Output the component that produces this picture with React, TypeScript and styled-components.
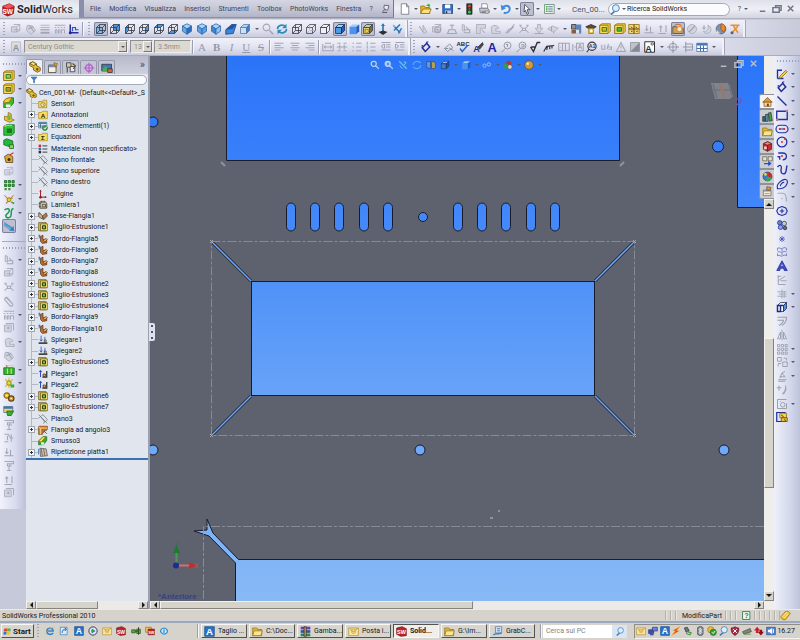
import React from "react";
import styled, { createGlobalStyle, css } from "styled-components";

/* ---------- icon drawings, on a 16 x 16 grid ---------- */

type Stroke = { d: string; s?: string; f?: string; w?: number };
type Letter = { t: string; x: number; y: number; size: number; f: string };
type Mark = Stroke | Letter;

const G = "#a3a5b4";
const LG = "#d3d5de";
const NAVY = "#1d2a9a";
const INK = "#2c3036";
const BLUE = "#4a97e4";
const SKY = "#a8d4f8";
const GOLD = "#f2cb35";
const OLIVE = "#8a6a10";
const GREEN = "#37b030";
const DGREEN = "#13661a";
const RED = "#cf2a2a";
const ORANGE = "#ef8b28";
const WHITE = "#ffffff";

const o = (x: number, y: number, r: number) =>
  `M${x - r} ${y}a${r} ${r} 0 1 0 ${2 * r} 0a${r} ${r} 0 1 0 ${-2 * r} 0z`;
const l = (d: string, s = G, w = 1.4): Stroke => ({ d, s, w });
const a = (d: string, f: string, s?: string, w = 1): Stroke => ({ d, f, s, w });
const t = (text: string, f = INK, size = 13, x = 8, y = 13): Letter => ({ t: text, f, size, x, y });

const wire = (s: string, face?: string): Mark[] => [
  ...(face ? [a(face, BLUE)] : []),
  l("M2 6h8v8h-8zM2 6l4-4h8v8l-4 4M10 6l4-4M6 2v8h8M6 10l-4 4", s, 1),
];
const solid = (top: string, front: string, side: string, s: string): Mark[] => [
  a("M2 6l4-4h8l-4 4z", top, s),
  a("M2 6h8v8h-8z", front, s),
  a("M10 6l4-4v8l-4 4z", side, s),
];
const hex = (left: string, right: string): Mark[] => [
  a("M8 1l6 3-6 4-6-4z", SKY, "#2a64a8"),
  a("M2 4l6 4v7l-6-4z", left, "#2a64a8"),
  a("M8 8l6-4v7l-6 4z", right, "#2a64a8"),
];
const boss = (inner: string): Mark[] => [
  a("M1 3l3-2h11v10l-3 3h-11z", GOLD, OLIVE),
  a("M1 3h11v11h-11z", "#f6dd62", OLIVE),
  a("M4 6h6v5h-6z", inner, DGREEN),
];
const chip = (c: string): Mark[] => [
  a("M2 5h7v7h-7z", LG, c),
  l("M5 2h8v8M9 5l4-3M9 12l4-2M5 9h8", c, 1.1),
];

const ICONS: Record<string, Mark[]> = {
  cubeRed: [
    a("M1 4l8-3 6 3-1 9-7 3-6-3z", "#c41f25", "#7d1015"),
    a("M1 4l8-3 6 3-8 3z", "#e8575a"),
    l("M7 7v8", "#7d1015", 0.8),
    t("SW", WHITE, 8, 7, 13),
  ],
  pin: [a("M6 2l8 1-2 8-5-1-2-3z", "#e8e9f0", "#4c4e5e", 1.4), l("M8 9l-5 4M2 15h9", "#4c4e5e", 1.6)],
  new: [a("M3 1h7l3 4v10h-10z", WHITE, "#666a78"), l("M10 1v4h3", "#666a78", 1)],
  open: [a("M1 4h5l1 2h6v8h-12z", "#e9b52e", OLIVE), a("M4 8h11l-3 6h-11z", "#fbe27a", OLIVE), a("M8 3l4-2 2 3-2 1z", GREEN)],
  save: [a("M1 2h13v12h-13z", "#3572c4", "#1c3b78"), a("M4 2h7v5h-7z", WHITE), a("M4 10h8v4h-8z", "#b9c8e4"), a("M5 11h2v3h-2z", INK)],
  traffic: [a("M5 1h7v14h-7z", "#2b3030", INK), a(o(8.5, 4, 2), "#e04a2c"), a(o(8.5, 8, 1.6), "#73581c"), a(o(8.5, 12, 2), "#32d24b")],
  print: [a("M5 1h7l1 6h-8z", WHITE, "#787c88"), a("M2 7h11l2 3v3h-12z", "#c6c8d2", "#676b76"), l("M5 11h7M5 13h8", "#676b76", 1), a(o(12, 12, 2), "#d8d8d0", "#888")],
  undo: [l("M3 7c3-5 10-4 10 1 0 4-4 6-8 5", "#3c8be0", 2.6), a("M1 2l1 8 6-3z", "#3c8be0")],
  cursor: [a("M5 2l7 7h-4l2 5-2 1-2-5-2 2z", WHITE, INK)],
  options: [a("M2 2h13v12h-13z", "#e9f2ec", "#5d8276"), l("M7 5h6M7 8h6M7 11h6", "#5d6a86", 1.2), a("M4 4h2v2h-2zM4 7h2v2h-2zM4 10h2v2h-2z", GREEN)],
  lens: [l("M9 10l-6 5", "#3c78c0", 2.4), a(o(10, 6, 5), "#d7efff", "#4f7fae", 1.4)],

  gBox: chip(G),
  gDye: [a("M3 3l7 1 4 6-6 5-6-5z", LG, G), l("M6 3l6 9M4 8l7-3", G)],
  gLines: [l("M2 3h12M2 6h12", G, 1), l("M2 9h12", G, 1.8), l("M2 13h12", G, 2.6)],
  gHatch: [l("M1 3h14M1 6h2m2 0h2m2 0h2m2 0h2M2 14v-5h2v5M6 14v-5h2v5M10 14v-5h4v5", G, 1.2)],
  axes: [l("M3 2v11h11", "#2c2a9e", 2), l("M6 11v-5h4v3h4", "#2456c8", 1.6), a(o(3, 13, 2), NAVY)],

  cubeFront: [a("M2 6h8v8h-8z", "#77b8f2"), ...wire(INK)],
  cubeBack: wire(INK, "M6 2h8v8h-8z"),
  cubeLeft: wire(INK, "M2 6l4-4v8l-4 4z"),
  cubeRight: wire(INK, "M10 6l4-4v8l-4 4z"),
  cubeTop: wire(INK, "M2 6l4-4h8l-4 4z"),
  cubeBottom: wire(INK, "M2 14l4-4h8l-4 4z"),
  iso1: hex("#66a9e8", "#2d6fbe"),
  iso2: hex("#5aa0e4", "#5aa0e4"),
  iso3: hex("#3f86d2", "#8cc2f2"),
  tilt: [a("M1 9l8-7h6l-4 12-10 1z", "#3b86d8", "#173c78"), a("M1 9l8-7h6l-5 6z", "#1f56a6")],
  normal: [...solid(SKY, "#c4e2fa", "#3a7dcc", "#5b7596")],
  gLens: [l("M10 10l5 5", G, 2.2), l(o(6, 6, 4.5), G, 1.4)],
  refresh: [l("M2 8c0-5 7-7 11-3M14 8c0 5-7 7-11 3", "#2e8bbd", 2.2), a("M14 1v6h-6zM2 15v-6h6z", "#2e8bbd")],
  wire: wire("#30333c"),
  hidden: [l("M2 6h8v8h-8zM2 6l4-4h8v8l-4 4M10 6l4-4", "#3b3e48", 1), l("M6 3v6M7 10h6M5 11l-2 2", "#a8aab4", 1)],
  outline: [a("M2 6h8v8h-8zM2 6l4-4h8l-4 4zM10 6l4-4v8l-4 4z", "#eef0f6", "#3b3e48")],
  shadedEdges: solid("#9fd0fa", "#4b9ce8", "#1f62b4", "#10284e"),
  shaded: [a("M2 5l4-3h9l-4 3z", "#9ccbfb"), a("M2 5h9v10h-9z", "#4a94f0"), a("M11 5l4-3v9l-4 4z", "#1f5fc8")],
  section: [...solid("#c6c8b8", "#e4df96", "#6c6c58", "#3a3a2e"), a("M4 8l6 1-2 4-4 1z", GOLD, OLIVE)],
  anchor: [l("M8 1v11", "#2f7aa8", 2.2), a("M5 4l3-3 3 3z", "#2f7aa8"), a("M2 12l6-2 6 2-6 4z", INK)],
  pencils: [l("M3 3l9 10M12 2l-8 8M10 14l4-7", "#2876b8", 2), a("M2 2l4 2-2 2z", "#7fd3ee")],

  gA: [a("M3 4l5 8V3l5 9-4 2z", LG, G)],
  gB: [...chip(G), l(o(9, 9, 4), G)],
  gC: [l("M8 2v6M5 3h6M4 9h8l2 5h-12z", G)],
  gD: [a("M3 2l3 1v8l-3-1z", LG, G), l("M6 9h7v4h-8M8 5l4 4", G)],
  gE: [a("M2 2h12v5h-7v7h-5z", LG, G), l("M9 9l4 4", G)],
  gF: [a("M3 7c0-6 10-4 10 0l-4 1v3h6v3h-11z", LG, G)],
  gG: [l("M2 13c3 0 2-4 6-5s3-5 6-6M4 14l9-9", G)],
  gH: [a("M6 2h4v5h3l-5 6-5-6h3z", LG, G), l("M2 14h12", G)],
  gI: [a("M1 8l6-4 8 3-6 5z", LG, G), l("M6 5v6M9 12v2", G)],
  gDown: [l("M2 13h12M5 3v7M3 8l2 2 2-2M10 5v8", G)],
  gUp: [l("M2 14h10M5 12v-8M3 6l2-2 2 2M12 3v9", G)],
  gRing: [a(o(8, 8, 6), LG, G), l("M4 12l8-8", G, 2)],
  gCrescent: [a("M9 3c6 2 6 10-1 11-4 0-5-3-5-3 5 1 8-3 6-8z", LG, G), l("M4 3v5M2 6l2 2 2-2", G)],
  partColor: [a("M2 2h6v6h-6z", "#8d919c", INK), a("M8 2h7v12h-7z", "#5c86b8"), a("M2 9h6v5h-6z", "#8a5c3a"), a("M8 9h4v5h-4z", "#dfe4ee")],
  hat: [a("M1 5l7-3 7 3-3 2h-8z", "#5a4a34", INK), a("M5 7h6v7h-6z", GOLD, OLIVE), a("M7 9h3v3h-3z", WHITE)],
  boxGold: boss("#e3b520"),
  boxGreen: boss("#58b03c"),
  boxGrid: [a("M1 2h14v12h-14z", "#f4d56a", OLIVE), l("M1 8h14M8 2v12M4 5l2 2M10 5l2 2M4 11h2M11 11h2", "#5a3c0c", 1.3)],
  simulate: [a("M1 5h5l1 2h8v7h-14z", "#c8a060", "#5d4620"), a(o(10, 8, 3.4), "#fbe9c0", ORANGE, 1.4), l("M3 4c2-3 8-3 10 0", "#c86a28", 1.3)],
  globeOrange: [a(o(8, 8, 6.5), "#7c93b0", "#5c5f68"), a("M8 1c6 0 8 8 3 11l-3-4z", ORANGE, "#9c4c10"), a("M2 9l5 5-4 0z", "#e8dcc8")],
  scissors: [l("M2 3h12M6 4l6 9M12 4l-7 8", ORANGE, 2), a(o(4, 13, 2), "#5a5f6a")],

  fontBox: [a("M2 1h12v14h-12z", "#d9dae2", "#b4b6c2"), t("A", "#8b8e9a", 12, 8, 13)],
  left: [l("M2 3h12M2 6h8M2 9h12M2 12h8", G)],
  center: [l("M2 3h12M4 6h8M2 9h12M4 12h8", G)],
  right: [l("M2 3h12M6 6h8M2 9h12M6 12h8", G)],
  fit: [l("M1 4v9h14v-9M4 8h8M5 6l-2 2 2 2M11 6l2 2-2 2M4 3h8M4 13h8", G)],
  split: [l("M2 3h4M10 3h4M2 13h4M10 13h4M1 8h14M5 5v6M11 5v6", G)],
  bullets: [l("M7 3h7M7 8h7M7 13h7M2 3h2M2 8h2M2 13h2", G)],
  numbers: [l("M7 3h7M7 8h7M7 13h7M3 1v4M3 6v4M3 11v4", G)],
  outdent: [l("M2 2h12M8 5h6M8 8h6M2 12h12M6 4v6M5 4l-3 3 3 3", G)],
  indent: [l("M2 2h12M8 5h6M8 8h6M2 12h12M2 4v6M3 4l3 3-3 3", G)],

  smartDim: [l("M3 9l6-6 4 5-6 6z", NAVY, 2), l("M2 7l2-1M8 2l3-1", NAVY, 1.4)],
  gDim: [l("M2 10l7-6 4 5-7 5zM8 9l6 4M2 10h5", "#8d90a0", 1.3)],
  spell: [t("ABC", "#23242c", 8, 8, 7), l("M4 10l3 4 7-8", "#2f68c8", 2)],
  painter: [t("A", NAVY, 12, 6, 15), a("M8 8l6-6 1 3-5 6z", "#4a4a48", INK)],
  note: [t("A", "#2225a8", 17, 8, 14)],
  balloon: [l(o(10, 6, 4.6) + "M7 10l-5 5M10 4v4M8 5l2-1", "#8d90a0", 1.2)],
  balloons: [l(o(10, 6, 4.6) + "M7 10l-5 5M8 5h4v3h-4", "#8d90a0", 1.2)],
  finish: [l("M2 8l4 6 5-12h4M3 8h6", INK, 1.8)],
  weld: [l("M1 14l4-7 10-1M6 7l-1 5M9 7v4M12 7v3", INK, 1.5)],
  tol: [l("M1 3h14v10h-14zM6 3v10M10 3v10M3 8h1", G)],
  datum: [l("M1 4v9M3 8h3M6 3h9v10h-9z", G), t("A", G, 9, 10.5, 11)],
  target: [l(o(8, 7, 5.5), "#343640", 1.5), t("A1", "#343640", 7, 8, 9), l("M4 11l-3 4", "#343640")],
  hole: [l("M1 5v6h4v-6M10 4l-2 7M9 8h5v3h-4", G)],
  warn: [l("M8 2l6 12h-12zM8 6v4M8 12v1", G)],
  hatch: [a("M2 2h12v12h-12z", "#c0c2ca", "#8c8e98"), a("M14 2v12h-12z", "#868994")],
  block: [a("M1 1h13v14h-13z", WHITE, INK, 1.3), t("A", INK, 12, 6, 14), l(o(11, 4, 1.6), INK, 1)],
  centerMark: [l(o(8, 8, 5) + "M8 0v16M0 8h16", "#8d90a0", 1.2)],
  centerLine: [l("M5 1v14M5 4h9v8h-9M1 8h14", "#8d90a0", 1.2)],
  table: [a("M1 3h14v11h-14z", WHITE, "#456ea6"), a("M1 3h14v3h-14z", "#3d74bd"), l("M1 10h14M6 6v8M10 6v8", "#456ea6")],

  bossA: boss("#8ec850"),
  bossB: boss("#b99a28"),
  fillet: [a("M1 14v-6c0-6 6-7 13-7v7l-5 6z", "#3bba2c", DGREEN), a("M1 8c0-6 6-7 11-7l-4 6z", GOLD, OLIVE), a("M4 10h6v4h-6z", "#e9fbe2")],
  rib: [a("M2 7l5 1v-6l4 2v6l4 2-6 3-7-3z", "#e8c238", OLIVE), a("M6 5l4 1v6h-4z", "#6fbb3e")],
  shell: [a("M1 3l4-2h10v11l-3 3h-11z", "#2fc43a", DGREEN), a("M5 6h7v6h-7z", "#1b7a20"), l("M1 3h3M3 2h9", GOLD, 1.2)],
  draft: [a("M1 3l4-2 8 3v6l-3 2-9-3z", "#26b83c", DGREEN), a("M8 9h6v5h-5z", "#8fd65c", DGREEN)],
  wizard: [a("M2 6l5-3 6 3v8h-9z", "#d6a93c", "#5c4010"), a(o(8, 10, 2), "#3a2c14"), l("M9 4l5-3", RED)],
  gShell: chip("#b2b4c0"),
  pattern: [a("M2 2h3v3h-3zM7 2h3v3h-3zM12 2h3v3h-3zM2 7h3v3h-3zM7 7h3v3h-3zM12 7h3v3h-3z", GREEN, DGREEN), a("M2 12h3v3h-3zM7 12h3v3h-3z", "#4e8a36")],
  refGeo: [l("M2 3l6 7 6-7M8 10l-4 4M5 7h8", "#b6922a", 1.5), a(o(8, 9, 2.6), GOLD, OLIVE), l("M11 12l4 2", GREEN, 2)],
  curve: [l("M2 4c3-3 8-2 6 2s-6 4-4 7 7 1 7-3-1-7 3-8", "#1f9a50", 2)],
  instant: [l("M1 3l11 7M1 7l9 6", "#6a86b8", 1.3), l("M2 5l11 7", "#3f9fd0", 2.2), a("M14 8l1 7-7-1z", "#2f86c0")],
  flange: [a("M1 5h14v9h-14z", GREEN, DGREEN), l("M3 2h10l2 3M6 6v7M11 6v7", "#c7e85a", 1.6), l("M5 2v3", OLIVE)],
  spark: [l("M3 3l10 10M13 3l-10 10M8 1v14", "#e0c02c", 1.6), a(o(8, 8, 3), "#d2e23c", OLIVE), a("M10 10h5v4h-5z", GREEN)],
  gears: [a(o(5, 6, 3.6), GOLD, OLIVE, 1.6), a(o(11, 10, 3.6), "#dc9d2e", "#65450c", 1.6), a(o(5, 6, 1), WHITE), a(o(11, 10, 1), WHITE)],
  configs: [a("M1 2h12v8h-12z", "#f6d552", "#54728c"), a("M1 2h12v3h-12z", "#3d74bd"), a("M5 8h9l-3 6h-5z", GREEN, DGREEN)],
  gClamp: [l("M2 2h12v3h-8v3h6M8 8v6M5 14h6M10 5l-2 3", "#a8aab8", 1.5)],
  gJoin: [l("M2 3h5l3 5h4M2 13h5M6 5v6M11 3v10", "#a8aab8", 1.5)],
  gClip: [l("M4 3l8 8c3 3-1 5-3 3l-6-7c-2-2 1-5 3-3l6 7", "#a8aab8", 1.5)],
  gSheet: [a("M2 4h9v9h-9z", LG, "#a8aab8"), l("M4 2h10v9M5 8h4M7 6v4", "#a8aab8", 1.3)],
  gMesh: [l("M2 3l4 4M14 3l-4 4M2 13l4-4M14 13l-4-4M6 7h4v3h-4zM2 3h3M11 3h3", "#a8aab8", 1.4)],

  sketch: [l("M2 14v-11h6M2 14h8", "#26309a", 1.8), a("M5 11l8-8 2 2-8 8-3 1z", GOLD, OLIVE)],
  line: [l("M2 2l12 12", "#2430a4", 1.8)],
  rect: [l("M1 3h14v11h-14z", "#2430a4", 1.8), a("M0 13h3v3h-3zM13 1h3v3h-3z", "#c87a92")],
  slot: [l("M5 3h6a5 5 0 0 1 0 10h-6a5 5 0 0 1 0-10zM5 8h6", "#2430a4", 1.6), a(o(5, 8, 1.4), RED), a(o(11, 8, 1.4), RED)],
  circle: [l(o(8, 8, 6.5), "#2430a4", 1.7), a(o(8, 8, 1.3), RED), a(o(12, 4, 1.2), RED)],
  arc: [l("M3 4h6c7 0 6 9 0 9M2 9h3v4", "#2430a4", 1.7), a(o(8, 8, 1.3), RED)],
  spline: [l("M2 4c3-4 6-2 5 2s0 8 4 7 2-9 4-11", "#2430a4", 1.8)],
  ellipse: [l("M2 13c-2-4 6-12 11-11s1 11-6 12-5 0-5-1zM6 11c-1-2 3-6 5-5", "#2430a4", 1.5)],
  gFillet: [l("M2 3h7c4 0 5 4 5 11", "#a8aab8", 1.6), a(o(8, 10, 1), "#a8aab8")],
  polygon: [l("M8 2l5 2 2 4-2 4-5 2-5-2-2-4 2-4zM8 5v6M5 8h6", "#2430a4", 1.5)],
  pics: [a(o(5, 5, 3), "#6c89a8", NAVY), a(o(11, 6, 3), "#c7d6a8", NAVY), a(o(6, 11, 3), "#8ca4d4", NAVY), a(o(12, 12, 2.4), "#4f6a9e", INK)],
  point: [l("M8 4v8M4 8h8M5 5l6 6M11 5l-6 6", "#3d48b0", 1)],
  plane: [
    l("M2 3c3-2 4 2 7 0s4 0 5 0M2 8c3-2 4 2 7 0s4 0 5 0M2 13c3-2 4 2 7 0s4 0 5 0M2 3v3M14 3v3M2 10v3M14 10v3M8 4v3M8 9v3", "#5a66b0", 1),
  ],
  text: [a("M8 1l7 13h-4l-1-3h-4l-1 3h-4z", "#4050c0", NAVY), a("M8 5l1 3h-2z", "#dfe2fa")],
  gTrim: [l("M3 2v12h10M3 9l9-6M2 3h5M6 9h8", "#9a9cab", 1.2)],
  gOffset: [l("M2 5h12M4 8h10M2 11h12M8 2v12M11 4v9", "#a8aab8", 1.3)],
  convert: [...solid("#e5ecf6", WHITE, "#4f8ee0", "#1c2c50"), l("M6 7v7h-4v-8h8", "#1c2c84", 2)],
  gSweep: [l("M2 3h12c0 6-2 8-6 11M2 7h8c0 3-3 5-6 7", "#9a9cab", 1.5)],
  gMirror: [l("M8 1v14M6 4l-4 9h4zM10 4l4 9h-4z", "#9a9cab", 1.2)],
  gGrid: [l("M2 2h3v3h-3zM7 2h3v3h-3zM12 2h3v3h-3zM2 7h3v3h-3zM7 7h3v3h-3zM12 7h3v3h-3zM2 12h3v3h-3zM7 12h3v3h-3zM12 12h3v3h-3z", "#9a9cab", 1.1)],
  gMove: [l("M2 2h5v5h-5zM9 8h6v6h-6zM7 10h-4v4M10 3h4v3", "#9a9cab", 1.2)],
  gRel: [l("M3 13h11M5 11l3-7 4 5h-7M8 4l4-2M3 15h9", "#9a9cab", 1.3)],
  gFix: [l("M4 2v7M1 5h6M8 13c4-2 5-6 5-11M10 14l4-8", "#9a9cab", 1.3)],
  gQuick: [l("M2 2h12M2 2v12M2 14h12M14 7v7M6 4v1", "#9a9cab", 1.3), l(o(9, 9, 3), "#9a9cab", 1.2)],
  rapid: [a("M1 2h11v12h-11z", "#dfe3f8", NAVY, 1.6), a("M5 3h9v6h-9z", "#f2d554", OLIVE), a("M7 9h8v5h-8z", "#e9c040", "#5c4410"), l("M7 5l3 3M11 11l2 2", "#7a3c18", 1.4)],

  part: [a("M1 3l4-2 5 3v2l5 3v4l-4 2-5-3v-3l-5-3z", "#e3bb34", "#5e4608"), a("M1 3l4-2 5 3-4 2z", "#f9e47c", "#5e4608"), a(o(11, 11, 1.6), "#5e4608")],
  propTab: [a("M2 4h10v10h-10z", "#f6f0dc", "#47423a"), a("M2 4h10v3h-10z", "#6d8ab0"), a("M9 1l5 1-2 5z", "#e6a63a", OLIVE)],
  configTab: [a("M2 1h6v6h-6z", "#d8c890", INK), a("M7 6h6v7h-6z", "#e8e8f0", INK), l("M3 8v6M10 2l4 3-3 4", "#5b4c2c", 1.5)],
  dimTab: [l(o(8, 8, 4.6) + "M8 1v14M1 8h14", "#b65ccc", 1.6)],
  renderTab: [a("M1 3h13v9h-13z", "#4178b4", INK), a("M2 9l4-4 4 5v2h-8z", "#4fa84e"), a("M9 9h6v5h-6z", "#d8682e", INK)],
  funnel: [a("M2 2h12l-5 6v6l-2-1v-5z", "#3f86cc", "#2a5f9e")],

  sensors: [a("M1 4h6l1-2h6v12h-13z", "#f4d568", "#9b7a20"), a(o(8, 9, 3.4), "#f9efc4", "#7e6010"), l("M8 7v2l2 1", "#7e6010", 1)],
  annot: [a("M1 4h5l1-2h8v12h-14z", "#f8dc5c", "#a5821c"), t("A", "#1f1c14", 10, 8, 13)],
  bom: [a("M1 2h13v9h-13z", "#eef2f6", "#406a8c"), a("M1 2h13v3h-13z", "#4a80a8"), l("M4 5v6M1 8h8", "#406a8c"), a(o(11, 11, 4), "#3fa45c", "#1a5a34"), l("M9 11l2 2 3-4", WHITE)],
  equat: [a("M1 4h5l1-2h8v12h-14z", "#f8dc5c", "#a5821c"), t("Σ", "#1f1c14", 10, 8, 13)],
  material: [l("M7 3h8M7 8h8M7 13h8", "#3c4450", 1.6), a("M1 1h4v4h-4z", RED), a("M1 6h4v4h-4z", "#2c6cc0"), a("M1 11h4v4h-4z", INK)],
  planeT: [l("M4 4l4-3 7 8-4 4zM1 7l3-3M8 15l3-2M1 1l14 14", "#6c717b", 1.1)],
  origin: [l("M4 2v11h9", "#a81f2c", 1.6), a("M2 4l2-3 2 3z", "#a81f2c"), a(o(4, 13, 2), "#821820"), a(o(12, 13, 1.4), "#3c4a5a")],
  lamiera: [a("M3 3h9l2 3v7h-11z", "#d9cfae", "#3f3a30", 1.4), l("M6 1v4M10 1v3M1 6h4M1 10h4M7 7h5v4h-5z", "#4d4334", 1.3)],
  baseFlange: [a("M1 3l6 4v6l-6-4z", "#c9b48c", "#3c3020"), a("M7 8l6-5 2 5-6 6z", "#b07a3c", "#3c3020"), l("M2 2l3 3", "#3c8fc8", 1.6)],
  cut: [a("M1 1h12v13h-12z", "#e5c134", "#54410c"), a("M4 3h11v11h-11z", "#f7e47a", "#54410c"), a("M7 6h5v5h-5z", "#8fc04a", "#183c10", 1.6)],
  edgeFlange: [l("M2 1v6M1 3h3", "#2e62b8", 1.4), a("M4 4l4-2v7l6 1v4l-7 1-3-3z", "#b5703a", "#46260e"), a("M8 10l5-3 2 2-4 4z", "#e9a85c", "#46260e")],
  unfold: [l("M5 1v8M3 7l2 3 2-3M11 3v8", "#2f4fc0", 1.3), l("M1 13h14", INK, 2.4), a("M10 8h3v4h-3z", "#d8c8a0", INK)],
  fold: [l("M4 13v-10M2 5l2-3 2 3", "#2f4fc0", 1.6), l("M7 13h7v-10", INK, 2), a("M8 8h4v4h-4z", "#d29a4c", "#46260e")],
  miter: [a("M1 2h14v5h-8v8h-6z", "#e78a28", "#5c3208"), l("M4 15v-9l-3-4M4 5h11", "#ffd48a", 1.2), l("M9 9l5 5M9 13v-4h5", "#5c3208", 1.2)],
  chamfer: [a("M1 14v-6l7-7h6v6l-5 7z", "#2faa2c", DGREEN), a("M1 8l7-7 4 1-7 8z", "#f6d84a", OLIVE), a("M5 10h5v4h-5z", "#e6fbdc")],
  flat: [a("M3 2l10 1 2 11-11 1z", "#cfc3ac", "#3a3a44"), l("M5 3l2 11M9 3l2 11", "#7c5a38", 1.4), l("M1 3v9", "#3f86cc", 1.6)],

  zoomFit: [l(o(6, 6, 4) + "M9 9l5 5", "#b9d2f0", 2), a(o(6, 6, 2.4), "#3f73c0")],
  zoomArea: [l(o(6, 6, 4) + "M9 9l5 5", "#b9d2f0", 2), a("M4 4h5v5h-5z", "#5f8cd8", "#dceafa")],
  zoomPrev: [l("M2 2l12 12", "#5fc0ea", 2.4), l("M9 3l4 1-3 4M3 9l4 5", "#8ccdf0", 1.4)],
  rotate: [l("M2 8c0-6 8-8 12-3M14 8c0 6-8 8-12 3", "#5fa8ea", 1.8)],
  sectionV: [a("M1 3l6-1v12l-6-2z", "#6d9ad4", "#26477a"), a("M9 2l6 2v9l-6 1z", "#c0a450", "#26477a")],
  orient: [...solid("#8fb8e6", "#4a7cc0", "#2a508c", "#1b3866")],
  glasses: [l(o(4, 9, 2.6) + o(11, 7, 2.6), "#9cc0ec", 1.6)],
  appear: [a(o(9, 5, 4), "#b23a30"), a(o(5, 10, 4), "#3a9a4a"), a(o(11, 11, 3.6), "#dcdcd0", "#555")],
  scene: [a(o(8, 8, 7), "#d09a38", "#5a4418"), a(o(6, 6, 2), "#f9e6ae")],

  home: [a("M1 9l7-7 7 7z", "#e39a36", "#7c4810"), a("M3 9h10v6h-10z", "#f7dc9c", "#7c4810"), a("M7 11h3v4h-3z", "#7c4810")],
  library: [a("M1 8h4v7h-4z", "#3d6a4a", INK), a("M5 5h4v10h-4z", "#5c88b4", INK), a("M9 3l4-1 2 12-4 1z", "#3fa046", INK)],
  folder: [a("M1 3h6l1 2h6v9h-13z", "#e7b93e", OLIVE), a("M3 7h12l-2 7h-12z", "#fae590", OLIVE)],
  toolboxR: [a("M2 4l6-3 6 3v8l-6 3-6-3z", "#c02c30", "#5e1014"), a("M2 4l6 2 6-2-6-3z", "#e88a86", "#5e1014"), a("M3 8h4v4h-4z", "#f4c6c0"), l("M8 6v9", "#5e1014", 1)],
  palette: [a("M1 1h6v6h-6zM9 1h6v6h-6z", "#e6e0c4", "#5a5a50"), a("M3 10h6v-3l5 4-5 4v-3h-6z", "#2c4cc8")],
  ball: [a(o(8, 8, 6.5), "#3c78d0", "#1d3e74"), a("M8 8v-6.5a6.5 6.5 0 0 1 6 8z", RED), a("M8 8l6 2a6.5 6.5 0 0 1-9 4z", "#38a848"), a(o(5, 5, 2), "#e6d650")],
  props: [a("M2 6h11v8h-11z", "#f4ecd8", "#6b6252"), a("M2 6h11v2h-11z", "#7d8ca8"), a("M7 1l6 1-1 4h-5z", "#e2963c", "#6b4a1c"), l("M4 11h7", "#8a8272", 1)],

  ie: [l("M3 8h10c0-6-10-6-10 0s7 7 10 3", "#2f84d6", 2.6), l("M1 13c2-6 8-11 14-11", "#e5b83a", 1.2)],
  desk: [a("M2 2h11v12h-11z", "#d7eafc", "#2f6ea8"), l("M5 11c0-4 2-6 6-6M9 3l3 2-3 3", "#2f6ea8", 1.6)],
  blueA: [a("M1 1h14v14h-14z", "#2472cc", "#184f90"), t("A", WHITE, 14, 8, 13)],
  media: [a(o(8, 8, 6.6), "#e6e8f0", "#3a3f68", 1.6), a("M6 4l6 4-6 4z", "#3266c4"), a(o(7, 8, 2), GREEN)],
  mail: [a("M1 3h14v11h-14z", "#f8e9a0", "#b18a34"), l("M3 4l5 5 6-6", "#c87f2a", 1.4), l(o(8, 8, 3), "#d09a3a", 1)],
  sw: [a("M1 3l8-2 6 3v10l-8 1-6-3z", "#c2232a", "#6c1014"), t("SW", WHITE, 8, 8, 12)],
  connect: [a("M1 6h6v5h-6zM9 5h6v7h-6z", "#5aa83c", "#27501a"), l("M6 8h5M12 2v12", "#27501a", 1.6)],
  swOpen: [a("M1 2h9v8h-9z", "#f2c955", OLIVE), a("M5 5h10v9h-10z", "#c2232a", "#6c1014"), t("SW", WHITE, 6, 10, 12)],
  swirl: [a(o(8, 8, 6), "#d4eafa"), l("M3 10c-3-6 8-10 10-3M13 6c3 7-8 10-10 3M8 5v6", "#2f8cd0", 2)],
  rar: [a("M1 1h14v4h-14z", "#7b3f9c"), a("M1 6h14v4h-14z", "#2c58a8"), a("M1 11h14v4h-14z", "#2c8a48"), a("M6 1h3v14h-3z", "#d6a13c", INK)],
  grab: [a("M5 1h9v9h-9z", "#e4eefa", "#4a6c9c"), l("M2 13c3-4 7 0 12-3", "#2f8cd0", 2.2), l("M7 4h5M7 7h5", "#4a6c9c")],
  flag: [a("M2 3l5-1v5l-6 1z", "#e2492a"), a("M8 2l6 1-1 5-6-1z", "#5db23a"), a("M1 9l6-1-1 5-5 1z", "#2f74d8"), a("M7 8l6 1-1 5-6-1z", "#f2c22c")],
  nets: [a("M1 6h8v6h-8z", "#41568c", NAVY), a("M7 2h8v6h-8z", "#6f84c4", NAVY), l("M3 14h6", NAVY, 1.6)],
  bolt: [a("M14 1l-11 6 4 1-6 7 12-7-4-1z", "#e5382a", "#f3b12c")],
  usb: [a("M2 3l5-1 3 6-5 2z", "#64747c", INK), l("M7 9l6 2-2 3-6-2", "#4e9c46", 2)],
  bt: [a("M4 3c1-3 8-3 9 0v10c-1 3-8 3-9 0z", "#7c858c", "#4c5258"), l("M6 5l5 5-3 3v-10l3 3-5 5", WHITE, 1.2)],
  antivirus: [a(o(6, 6, 5), "#f2bd34", OLIVE), a(o(10, 10, 5), "#3f9c3c", DGREEN), l("M8 10l2 2 3-4", WHITE, 1.4)],
  shield: [a("M8 1c3 2 6 2 6 2 1 6-2 10-6 12-4-2-7-6-6-12 3 0 6-2 6-2z", "#a82c48", "#5c0e24"), l("M5 5l6 6M11 5l-6 6", WHITE, 1.6)],
  eject: [a("M1 9l12-5 2 5-12 4z", "#7d8678", "#3c4038"), l("M3 13h11", "#5c9848", 1.6)],
  arrows: [a("M5 1l5 6h-3v4h-4v-4h-3z", "#c82028"), a("M11 15l5-6h-3v-3h-4v3h-3z", "#8c1018")],
  volume: [a("M1 2h14v12h-14z", "#4c82d8", "#204a90"), a("M3 6h3l4-3v10l-4-3h-3z", WHITE), l("M12 5v6", WHITE)],
  help: [a("M1 1h13v14h-13z", "#eef8ee", "#226a3c", 1.4), t("?", "#1d8a3a", 13, 8, 13)],
  tag: [a("M1 10l7-8h4l3 3-7 9h-4z", "#f0c034", "#8c6a10"), l("M4 10l6-7M6 12l6-7", "#fdf0a8", 1.4)],
};

const Glyph = styled.svg<{ $size: number }>`
  display: block;
  flex: none;
  width: ${(p) => p.$size}px;
  height: ${(p) => p.$size}px;
  overflow: visible;
`;

function Icon({ name, size = 12 }: { name: string; size?: number }) {
  return (
    <Glyph $size={size} viewBox="0 0 16 16" aria-hidden="true">
      {(ICONS[name] || []).map((m, i) =>
        "t" in m ? (
          <text key={i} x={m.x} y={m.y} fontSize={m.size} fill={m.f} textAnchor="middle" fontFamily="Liberation Sans, sans-serif" fontWeight="700">
            {m.t}
          </text>
        ) : (
          <path key={i} d={m.d} fill={m.f || "none"} stroke={m.s || "none"} strokeWidth={m.w || 1} />
        )
      )}
    </Glyph>
  );
}

/* ---------- page ---------- */

const Global = createGlobalStyle`
  *, *::before, *::after { box-sizing: border-box; }
  body { margin: 0; background: #c5c8d9; }
  body, button, input, select { font-family: Roboto, "Liberation Sans", sans-serif; font-size: 7px; color: #17181c; }
  button { padding: 0; border: 0; background: none; }
  ul { margin: 0; padding: 0; list-style: none; }
`;

const Page = styled.div`
  display: flex;
  flex-direction: column;
  min-height: 100vh;
`;

const bar = css`
  display: flex;
  align-items: center;
  flex: none;
  overflow: hidden;
`;

const MenuBar = styled.header`
  ${bar}
  height: 19px;
  padding-right: 4px;
  background: linear-gradient(#dfe1ea, #eeeff5 50%, #d2d4df);
  border-bottom: 1px solid #b1b3c3;
`;

const Brand = styled.div`
  display: flex;
  align-items: center;
  gap: 2px;
  width: 79px;
  padding-left: 2px;
  font-size: 11px;
  color: #25262d;
  flex: none;
`;

const MenuStrip = styled.nav`
  display: flex;
  align-items: center;
  justify-content: space-between;
  width: 315px;
  height: 18px;
  padding: 0 3px 0 6px;
  border-left: 5px solid #8b8ea9;
  border-right: 1px solid #73768d;
  background: linear-gradient(#d4d6e3, #c3c5d5 60%, #b1b3c8);
  border-bottom: 1px solid #8c8fa6;
  flex: none;
`;

const MenuItem = styled.button`
  color: #42435a;
  line-height: 14px;
`;

const QuickTools = styled.div`
  display: flex;
  align-items: center;
  justify-content: space-between;
  width: 170px;
  padding: 0 2px 0 4px;
  flex: none;
`;

const DocName = styled.span`
  width: 44px;
  padding-left: 8px;
  color: #4b4d5c;
  font-size: 8px;
  white-space: nowrap;
  flex: none;
`;

const SearchPill = styled.label`
  display: flex;
  align-items: center;
  width: 122px;
  height: 13px;
  gap: 1px;
  border: 1px solid #a3a6b6;
  border-radius: 7px;
  background: #fbfbfd;
  flex: none;
`;

const BareInput = styled.input`
  flex: 1;
  min-width: 0;
  width: 0;
  padding: 0;
  border: 0;
  background: none;
  outline: 0;
  color: inherit;
  &::placeholder { color: inherit; opacity: 1; }
`;

const WindowButtons = styled.div<{ $light?: boolean }>`
  display: flex;
  align-items: center;
  gap: ${(p) => (p.$light ? 5 : 4)}px;
  color: ${(p) => (p.$light ? "#b9bdc8" : "#707487")};
`;

const WindowButton = styled.button`
  color: inherit;
`;

const Spring = styled.div`
  flex: 1;
`;

const Gap = styled.span<{ $s: number }>`
  flex: 0 0 ${(p) => p.$s}px;
`;

const ToolRow = styled.div`
  ${bar}
  height: 18px;
  background: linear-gradient(#f1f2fa, #dfe1ef 60%, #c9cbde);
  border-bottom: 1px solid #a9abc0;
`;

const ToolDock = styled.div`
  flex: none;
  background: linear-gradient(90deg, #d9dbe9, #c5c8d9);
  padding-top: 1px;
`;

const Run = styled.div<{ $len: number; $column?: boolean }>`
  display: flex;
  flex: none;
  justify-content: space-between;
  ${(p) => (p.$column ? css`flex-direction: column; height: ${p.$len}px;` : css`width: ${p.$len}px;`)}
`;

const ToolButton = styled.button<{ $pressed?: boolean }>`
  display: grid;
  place-items: center;
  width: 14px;
  height: 14px;
  flex: none;
  border-radius: 2px;
  ${(p) => p.$pressed && css`background: #bdbfd2; box-shadow: inset 0 0 0 1px #7e819c;`}
`;

const LetterButton = styled(ToolButton)<{ $look?: "bold" | "italic" | "under" | "strike" }>`
  color: #9799a8;
  font: 11px "Liberation Serif", serif;
  font-weight: ${(p) => (p.$look === "bold" ? 700 : 400)};
  font-style: ${(p) => (p.$look === "italic" ? "italic" : "normal")};
  text-decoration: ${(p) => (p.$look === "under" ? "underline" : p.$look === "strike" ? "line-through" : "none")};
`;

const Grip = styled.span<{ $flat?: boolean }>`
  flex: none;
  ${(p) =>
    p.$flat
      ? css`width: 22px; height: 2px; margin: 0 auto; background: repeating-linear-gradient(90deg, #9fa2b8 0 1px, transparent 1px 3px);`
      : css`width: 2px; height: 14px; margin: 0 4px 0 3px; background: repeating-linear-gradient(#9fa2b8 0 1px, transparent 1px 3px);`}
`;

const Rule = styled.span`
  width: 2px;
  height: 14px;
  margin: 0 1px;
  flex: none;
  border-left: 1px solid #9a9db3;
  border-right: 1px solid #f8f8fc;
`;

const RowEnd = styled.span`
  align-self: stretch;
  width: 3px;
  flex: none;
  border-right: 2px solid #f1f2f8;
  box-shadow: 1px 0 #a3a6ba;
`;

const RowVoid = styled.span`
  align-self: stretch;
  flex: 1;
  margin-left: 1px;
  background: linear-gradient(90deg, #d8dae8, #c8cada);
`;

const Caret = styled.span<{ $w?: number }>`
  width: ${(p) => p.$w || 5}px;
  display: grid;
  place-items: center;
  flex: none;
  &::after {
    content: "";
    border: 2px solid transparent;
    border-top-color: #55586c;
    border-bottom: 0;
  }
`;

const Combo = styled.label<{ $w: number }>`
  display: flex;
  width: ${(p) => p.$w}px;
  height: 13px;
  flex: none;
  border: 1px solid #8f8f92;
  border-right-color: #eeeeee;
  border-bottom-color: #eeeeee;
  background: #dcd9d3;
  color: #8d8c8b;
  select, input { width: 0; min-width: 0; flex: 1; appearance: none; border: 0; padding: 0 0 0 3px; background: none; color: inherit; outline: 0; }
`;

const DropKnob = styled.span`
  display: grid;
  place-items: center;
  width: 9px;
  flex: none;
  background: #d6d3cc;
  border: 1px solid #f6f5f2;
  border-right-color: #77756f;
  border-bottom-color: #77756f;
`;

const Work = styled.main`
  display: flex;
  flex: 1;
  min-height: 0;
`;

const SideDock = styled.aside<{ $right?: boolean }>`
  width: 26px;
  flex: none;
  background: #c6c9da;
  ${(p) => p.$right && css`background: linear-gradient(90deg, #eef0fb, #d0d4e9 70%, #bfc3d9);`}
`;

const SideBar = styled.div<{ $right?: boolean }>`
  display: flex;
  flex-direction: column;
  gap: 4px;
  padding: ${(p) => (p.$right ? "4px 0 0 1px" : "7px 0 9px 2px")};
  background: linear-gradient(90deg, #f1f2fc, #d8dbee 60%, #bcc0d8);
  ${(p) => p.$right && css`background: none; gap: 5px;`}
`;

const SideCell = styled.div`
  display: flex;
  align-items: center;
  gap: 1px;
  height: 13px;
`;

const Break = styled.span`
  height: 2px;
  margin-top: 4px;
  border-top: 1px solid #a7aac0;
`;

const TreePanel = styled.section`
  position: relative;
  display: flex;
  flex-direction: column;
  width: 124px;
  flex: none;
  background: #e1e5ed;
  border-right: 2px solid #9ba0b0;
`;

const TabBar = styled.div`
  display: flex;
  align-items: flex-end;
  gap: 1px;
  height: 18px;
  padding-top: 3px;
  background: linear-gradient(#b8bacb, #cdd0dd);
`;

const Tab = styled.button<{ $on?: boolean }>`
  display: grid;
  place-items: center;
  width: 17px;
  height: ${(p) => (p.$on ? 15 : 14)}px;
  border: 1px solid #9698ab;
  border-bottom: 0;
  border-radius: 2px 2px 0 0;
  background: ${(p) => (p.$on ? "#edf0f6" : "#c4c6d5")};
`;

const More = styled.button`
  margin-left: auto;
  padding: 0 3px 3px 0;
  font-size: 11px;
  color: #4b4f66;
`;

const FilterBox = styled.label`
  display: flex;
  align-items: center;
  height: 10px;
  margin: 1px 1px 3px 0;
  padding-left: 3px;
  border: 1px solid #a5a9b8;
  border-radius: 5px;
  background: #fcfdfe;
`;

const RootRow = styled.div`
  display: flex;
  align-items: center;
  gap: 2px;
  height: 10px;
  overflow: hidden;
  white-space: nowrap;
`;

const Tree = styled.ul`
  display: grid;
  grid-auto-rows: 1fr;
  min-height: 360px;
`;

const TreeRow = styled.li`
  display: flex;
  align-items: center;
  white-space: nowrap;
`;

const Branch = styled.span`
  display: grid;
  place-items: center;
  align-self: stretch;
  width: 12px;
  flex: none;
  background:
    linear-gradient(#b4b8c2, #b4b8c2) 5px 0 / 1px 100% no-repeat,
    linear-gradient(#b4b8c2, #b4b8c2) 6px 50% / 6px 1px no-repeat;
`;

const Expand = styled.button`
  display: grid;
  place-items: center;
  width: 7px;
  height: 7px;
  margin-right: 1px;
  border: 1px solid #a0a4ae;
  background:
    linear-gradient(#30343c, #30343c) center / 3px 1px no-repeat,
    linear-gradient(#30343c, #30343c) center / 1px 3px no-repeat,
    #f4f6f9;
`;

const RowLabel = styled.span`
  padding-left: 3px;
`;

const Rollback = styled.div`
  height: 2px;
  background: #3a71b4;
`;

const Handle = styled.button`
  position: absolute;
  right: -7px;
  top: 267px;
  z-index: 2;
  display: flex;
  flex-direction: column;
  align-items: center;
  justify-content: space-around;
  width: 6px;
  height: 18px;
  border-radius: 0 2px 2px 0;
  background: #dfe2ee;
  i { width: 2px; height: 2px; background: #4b5068; }
`;

const knob = css`
  background: #d6d3ca;
  border: 1px solid #f4f2ec;
  border-right-color: #85837b;
  border-bottom-color: #85837b;
`;

const HScroll = styled.div`
  display: flex;
  height: 8px;
  flex: none;
  background: #eceae6;
`;

const VScroll = styled.div`
  display: flex;
  flex-direction: column;
  width: 10px;
  flex: none;
  padding-top: 143px;
  background: #efeeea;
`;

const Thumb = styled.span<{ $grow: number }>`
  ${knob}
  flex: ${(p) => p.$grow} 0 0;
`;

const Track = styled.span<{ $grow: number }>`
  flex: ${(p) => p.$grow} 0 0;
`;

const ArrowKnob = styled.button<{ $dir: "left" | "right" | "up" | "down" }>`
  ${knob}
  display: grid;
  place-items: center;
  width: 10px;
  height: ${(p) => (p.$dir === "up" || p.$dir === "down" ? 10 : 8)}px;
  flex: none;
  &::after {
    content: "";
    border: 3px solid transparent;
    border-${(p) => ({ left: "right", right: "left", up: "bottom", down: "top" })[p.$dir]}-color: #16171a;
    border-${(p) => ({ left: "left", right: "right", up: "top", down: "bottom" })[p.$dir]}-width: 0;
  }
`;

const ViewColumn = styled.section`
  display: flex;
  flex-direction: column;
  flex: 1;
  min-width: 0;
`;

const Canvas = styled.div`
  position: relative;
  flex: 1;
  min-height: 0;
  background: #5d626e;
`;

const Drawing = styled.svg`
  position: absolute;
  inset: 0;
  width: 100%;
  height: 100%;
`;

const HeadsUp = styled.div`
  position: absolute;
  top: 2px;
  left: 218px;
  display: flex;
  align-items: center;
`;

const ViewButtons = styled.div`
  position: absolute;
  top: 3px;
  right: 5px;
`;

const TaskTabs = styled.div`
  position: absolute;
  top: 38px;
  right: -10px;
  z-index: 2;
  display: flex;
  flex-direction: column;
`;

const TaskTab = styled.button<{ $on?: boolean }>`
  display: grid;
  place-items: center;
  width: 15px;
  height: 15px;
  border: 1px solid #8f919c;
  border-right: 0;
  border-radius: 2px 0 0 2px;
  background: ${(p) => (p.$on ? "#f4f4f6" : "#cbccd0")};
`;

const Status = styled.footer`
  ${bar}
  height: 12px;
  padding: 0 9px 0 2px;
  background: #d6d3cc;
  border-top: 1px solid #eceae5;
`;

const Ridges = styled.span<{ $w: number }>`
  width: ${(p) => p.$w}px;
  height: 9px;
  flex: none;
  background: repeating-linear-gradient(90deg, #b3b0a8 0 1px, #e8e6e0 1px 2px, transparent 2px 5px);
`;

const StatusCell = styled.span`
  padding: 0 3px;
`;

const TaskBar = styled.footer`
  ${bar}
  height: 19px;
  padding: 0 0 1px 1px;
  background: #d6d3cc;
  border-top: 2px solid #9aa8c0;
`;

const TaskButton = styled.button<{ $on?: boolean; $start?: boolean }>`
  display: flex;
  align-items: center;
  gap: ${(p) => (p.$start ? 1 : 3)}px;
  width: ${(p) => (p.$start ? 33 : 46)}px;
  height: 14px;
  padding: 0 ${(p) => (p.$start ? 1 : 2)}px;
  flex: none;
  white-space: nowrap;
  overflow: hidden;
  background: ${(p) => (p.$on ? "#efeeeb" : "#d8d5ce")};
  border: 1px solid;
  border-color: ${(p) => (p.$on ? "#55534e #f8f7f4 #f8f7f4 #55534e" : "#f8f7f4 #55534e #55534e #f8f7f4")};
  font-weight: ${(p) => (p.$on || p.$start ? 700 : 400)};
  font-size: ${(p) => (p.$start ? 8 : 7)}px;
`;

const Launch = styled.div`
  display: flex;
  justify-content: space-between;
  width: 128px;
  margin-right: 25px;
  flex: none;
`;

const Windows = styled.div`
  display: flex;
  gap: 2px;
  margin: 0 4px 0 1px;
`;

const DeskSearch = styled.label`
  display: flex;
  align-items: center;
  width: 84px;
  height: 13px;
  padding-left: 3px;
  background: #ffffff;
  color: #85827c;
  flex: none;
`;

const LensKnob = styled.span`
  display: grid;
  place-items: center;
  align-self: stretch;
  width: 15px;
  background: #dbe4f2;
`;

const Tray = styled.div`
  display: flex;
  flex: 1;
  align-items: center;
  justify-content: space-between;
  height: 15px;
  margin-left: 7px;
  padding: 0 5px 0 1px;
  border: 1px solid #918e87;
  border-right: 0;
  border-bottom-color: #f4f2ee;
`;

/* ---------- data ---------- */

const MENUS = ["File", "Modifica", "Visualizza", "Inserisci", "Strumenti", "Toolbox", "PhotoWorks", "Finestra", "?"];

const TREE: [string, string, boolean][] = [
  ["Sensori", "sensors", false],
  ["Annotazioni", "annot", true],
  ["Elenco elementi(1)", "bom", true],
  ["Equazioni", "equat", true],
  ["Materiale <non specificato>", "material", false],
  ["Piano frontale", "planeT", false],
  ["Piano superiore", "planeT", false],
  ["Piano destro", "planeT", false],
  ["Origine", "origin", false],
  ["Lamiera1", "lamiera", false],
  ["Base-Flangia1", "baseFlange", true],
  ["Taglio-Estrusione1", "cut", true],
  ["Bordo-Flangia5", "edgeFlange", true],
  ["Bordo-Flangia6", "edgeFlange", true],
  ["Bordo-Flangia7", "edgeFlange", true],
  ["Bordo-Flangia8", "edgeFlange", true],
  ["Taglio-Estrusione2", "cut", true],
  ["Taglio-Estrusione3", "cut", true],
  ["Taglio-Estrusione4", "cut", true],
  ["Bordo-Flangia9", "edgeFlange", true],
  ["Bordo-Flangia10", "edgeFlange", true],
  ["Spiegare1", "unfold", false],
  ["Spiegare2", "unfold", false],
  ["Taglio-Estrusione5", "cut", true],
  ["Piegare1", "fold", false],
  ["Piegare2", "fold", false],
  ["Taglio-Estrusione6", "cut", true],
  ["Taglio-Estrusione7", "cut", true],
  ["Piano3", "planeT", false],
  ["Flangia ad angolo3", "miter", true],
  ["Smusso3", "chamfer", false],
  ["Ripetizione piatta1", "flat", true],
];

/* A trailing "*" marks a pressed tool, a trailing "+" one with a drop-down. */
const FEATURES = "bossA+ bossB+ fillet+ rib shell draft wizard gShell pattern+ refGeo+ curve+ instant*".split(" ");
const SHEET = "gD+ gBox gMesh gClip gHatch+ gSheet gF+ gDye flange+ spark+ gears configs gClamp gJoin gDown gClamp gUp gSheet".split(" ");
const SKETCH =
  "sketch+ smartDim+ line+ rect+ slot+ circle+ arc+ spline+ ellipse+ gFillet+ polygon pics point plane text gTrim gOffset+ convert+ gSweep gMirror gGrid+ gMove+ gRel+ gFix gQuick+ rapid".split(" ");

const TASKS: [string, string][] = [
  ["Taglio ...", "blueA"],
  ["C:\\Doc...", "folder"],
  ["Gamba...", "rar"],
  ["Posta i...", "mail"],
  ["Solid...", "sw"],
  ["G:\\Im...", "folder"],
  ["GrabC...", "grab"],
];

function Tools({ names, len }: { names: string; len: number }) {
  return (
    <Run $len={len}>
      {names.split(" ").map((n, i) => {
        const name = n.replace("*", "");
        return (
          <ToolButton key={i} aria-label={name} $pressed={n.endsWith("*")}>
            <Icon name={name} />
          </ToolButton>
        );
      })}
    </Run>
  );
}

function SideTools({ items, len }: { items: string[]; len: number }) {
  return (
    <Run $len={len} $column>
      {items.map((n, i) => {
        const name = n.replace(/[+*]/, "");
        return (
          <SideCell key={i}>
            <ToolButton aria-label={name} $pressed={n.endsWith("*")}>
              <Icon name={name} />
            </ToolButton>
            {n.endsWith("+") && <Caret />}
          </SideCell>
        );
      })}
    </Run>
  );
}

function WinControls({ light }: { light?: boolean }) {
  const marks = ["M2 8h6", "M4 4v-2h6v5h-2M1 4h7v5h-7z", "M2 2l6 6M8 2l-6 6"];
  const names = ["Minimize", "Restore", "Close"];
  return (
    <WindowButtons $light={light}>
      {marks.map((d, i) => (
        <WindowButton key={d} aria-label={names[i]}>
          <Glyph $size={10} viewBox="0 0 11 11">
            <path d={d} fill="none" stroke="currentColor" strokeWidth="1.6" />
          </Glyph>
        </WindowButton>
      ))}
    </WindowButtons>
  );
}

function Model() {
  const edge = "#161c2c";
  return (
    <Drawing viewBox="150 56 614 546" preserveAspectRatio="xMinYMin slice" role="img" aria-label="Sheet metal part, front view">
      <defs>
        <linearGradient id="sky" gradientUnits="userSpaceOnUse" x1="0" y1="56" x2="0" y2="602">
          <stop offset="0" stopColor="#2a74f8" />
          <stop offset="0.2" stopColor="#3a80fb" />
          <stop offset="0.42" stopColor="#5092f7" />
          <stop offset="0.62" stopColor="#67a3f8" />
          <stop offset="1" stopColor="#88b9f5" />
        </linearGradient>
      </defs>
      <g fill="url(#sky)" stroke={edge} strokeWidth="1">
        <path d="M226.5 50V160.500H619.5V50zM737.5 50V207.500H770V50z" />
        {[291, 315, 339, 364, 388, 458, 482, 506, 531, 555].map((x) => (
          <rect key={x} x={x - 4.5} y="203" width="9" height="28" rx="4.5" />
        ))}
        <circle cx="423" cy="217" r="4.5" />
        <circle cx="718" cy="146.5" r="5.5" />
        <circle cx="153" cy="122" r="5" />
        <circle cx="153" cy="450" r="5" />
        <circle cx="420" cy="450" r="5" />
        <circle cx="724" cy="450" r="5" />
        <rect x="251.5" y="281.5" width="343" height="114" />
        <path d="M770 559.500H238.500L213 533L207 519V530L194 531L209 536L235.500 563V610H770z" />
      </g>
      {["M213 243L251 281", "M633 243L595 281", "M213 434L251 396", "M633 434L595 396"].map((d) => (
        <g key={d}>
          <path d={d} stroke={edge} strokeWidth="3" />
          <path d={d} stroke="#6fa6f0" strokeWidth="1.6" />
        </g>
      ))}
      <g fill="none" stroke="#9a9ea8" strokeWidth="1" strokeDasharray="9 2 3 2" opacity="0.7">
        <path d="M211.500 241.500H634.500V435.500H211.500z" />
        <path d="M764 526.500H203.500V602" />
      </g>
      <g stroke="#a4a8b0" strokeWidth="1">
        <path d="M210 240l3 3M213 240l-3 3M633 240l3 3M636 240l-3 3M210 434l3 3M213 434l-3 3M633 434l3 3M636 434l-3 3" />
        <path d="M221 162l4 4M624 162l-4 4M490 518h3M498 511h2" strokeWidth="2" opacity="0.7" />
      </g>
      <g>
        <path d="M176.500 565V550" stroke="#4d9a58" strokeWidth="2" />
        <path d="M173 553l3.500-8 3.500 8z" fill="#1e7a2c" />
        <path d="M177 565.500H190" stroke="#e06a68" strokeWidth="2" />
        <path d="M189 562l8 3.500-8 3.500z" fill="#c82c2c" />
        <circle cx="176" cy="565.5" r="3" fill="#1d2a9a" />
        <text x="174" y="546" fontSize="7" fill="#2c7c3a">Y</text>
        <text x="194" y="568" fontSize="7" fill="#d04a48">X</text>
        <text x="158" y="599" fontSize="8" fontWeight="700" fontFamily="Liberation Sans, sans-serif" fill="#393f86">*Anteriore</text>
      </g>
      <g opacity="0.5">
        <path d="M711 83h17l5 13-3 3h-15z" fill="#a4a4a8" />
        <path d="M713 84l4 14M729 84l3 12M712 90h19" stroke="#82858c" strokeWidth="1.5" fill="none" />
        <path d="M720 83l5 15" stroke="#d0906c" strokeWidth="3" fill="none" />
      </g>
      <path d="M736 100c3-3 7 0 4 3l-4 2" stroke="#7655a8" strokeWidth="1.4" fill="none" />
    </Drawing>
  );
}

export default function App() {
  return (
    <Page>
      <Global />
      <MenuBar>
        <Brand>
          <Icon name="cubeRed" size={13} />
          <span><b>Solid</b>Works</span>
        </Brand>
        <MenuStrip>
          {MENUS.map((m) => <MenuItem key={m}>{m}</MenuItem>)}
          <Icon name="pin" size={9} />
        </MenuStrip>
        <QuickTools>
          <ToolButton aria-label="New"><Icon name="new" /></ToolButton><Caret />
          <ToolButton aria-label="Open"><Icon name="open" /></ToolButton><Caret />
          <ToolButton aria-label="Save"><Icon name="save" /></ToolButton><Caret />
          <ToolButton aria-label="Rebuild"><Icon name="traffic" /></ToolButton>
          <ToolButton aria-label="Print"><Icon name="print" /></ToolButton><Caret />
          <ToolButton aria-label="Undo"><Icon name="undo" /></ToolButton><Caret />
          <ToolButton aria-label="Select" $pressed><Icon name="cursor" /></ToolButton><Caret />
          <ToolButton aria-label="Options"><Icon name="options" /></ToolButton><Caret />
        </QuickTools>
        <DocName>Cen_00...</DocName>
        <SearchPill>
          <Icon name="lens" size={11} />
          <Caret />
          <BareInput aria-label="Ricerca SolidWorks" placeholder="Ricerca SolidWorks" />
        </SearchPill>
        <Spring />
        <MenuItem>?</MenuItem>
        <Caret $w={9} />
        <Spring />
        <WinControls />
      </MenuBar>

      <ToolDock>
        <ToolRow>
          <Grip />
          <Tools len={72} names="gBox gDye gLines gHatch axes" />
          <Rule />
          <Grip />
          <Tools len={158} names="cubeFront* cubeBack cubeLeft cubeRight cubeTop cubeBottom iso1 iso2 iso3 tilt normal" />
          <Caret $w={9} />
          <Tools len={143} names="gLens refresh wire hidden outline shadedEdges* shaded section* anchor pencils" />
          <RowEnd />
          <Grip />
          <Tools len={144} names="gA gB gC gD gE gF gG gMesh gH gI" />
          <Caret $w={9} />
          <Tools len={159} names="partColor hat boxGold boxGreen boxGrid gDown gUp simulate* gRing gCrescent globeOrange" />
          <Tools len={14} names="scissors" />
          <RowEnd />
          <RowVoid />
        </ToolRow>
        <ToolRow>
          <Grip />
          <Tools len={15} names="fontBox" />
          <Combo $w={104}>
            <select aria-label="Font" defaultValue="Century Gothic"><option>Century Gothic</option></select>
            <DropKnob><Caret /></DropKnob>
          </Combo>
          <Gap $s={2} />
          <Combo $w={23}>
            <select aria-label="Font size" defaultValue="13"><option>13</option></select>
            <DropKnob><Caret /></DropKnob>
          </Combo>
          <Gap $s={1} />
          <Combo $w={37}><input aria-label="Text height" defaultValue="3.5mm" /></Combo>
          <Rule />
          <Run $len={73}>
            <LetterButton>A</LetterButton>
            <LetterButton $look="bold">B</LetterButton>
            <LetterButton $look="italic">I</LetterButton>
            <LetterButton $look="under">U</LetterButton>
            <LetterButton $look="strike">S</LetterButton>
          </Run>
          <Rule />
          <Tools len={45} names="left center right" />
          <Rule />
          <Tools len={86} names="fit split bullets numbers outdent indent" />
          <RowEnd />
          <Grip />
          <Tools len={14} names="smartDim" />
          <Caret $w={9} />
          <Tools len={215} names="gDim spell painter note balloon balloons finish weld tol datum target hole warn hatch block" />
          <Caret $w={9} />
          <Tools len={43} names="centerMark centerLine table" />
          <Caret $w={9} />
          <Gap $s={3} />
          <RowEnd />
          <RowVoid />
        </ToolRow>
      </ToolDock>

      <Work>
        <SideDock>
          <SideBar>
            <Grip $flat />
            <SideTools items={FEATURES} len={164} />
            <Break />
            <Grip $flat />
            <SideTools items={SHEET} len={247} />
          </SideBar>
        </SideDock>

        <TreePanel>
          <TabBar>
            <Tab $on aria-label="FeatureManager"><Icon name="part" /></Tab>
            <Tab aria-label="PropertyManager"><Icon name="propTab" /></Tab>
            <Tab aria-label="ConfigurationManager"><Icon name="configTab" /></Tab>
            <Tab aria-label="DimXpertManager"><Icon name="dimTab" /></Tab>
            <Tab aria-label="RenderManager"><Icon name="renderTab" /></Tab>
            <More aria-label="More tabs">»</More>
          </TabBar>
          <FilterBox>
            <Icon name="funnel" size={8} />
            <BareInput aria-label="Filter" />
          </FilterBox>
          <RootRow>
            <Icon name="part" size={11} />
            Cen_001-M-&nbsp; (Default&lt;&lt;Default&gt;_S
          </RootRow>
          <Tree>
            {TREE.map(([name, icon, more]) => (
              <TreeRow key={name}>
                <Branch>{more && <Expand aria-label={`Expand ${name}`} />}</Branch>
                <Icon name={icon} size={10} />
                <RowLabel>{name}</RowLabel>
              </TreeRow>
            ))}
          </Tree>
          <Rollback />
          <Spring />
          <HScroll>
            <ArrowKnob $dir="left" aria-label="Scroll left" />
            <Thumb $grow={62} />
            <Track $grow={42} />
            <ArrowKnob $dir="right" aria-label="Scroll right" />
          </HScroll>
          <Handle aria-label="Collapse panel"><i /><i /><i /></Handle>
        </TreePanel>

        <ViewColumn>
          <Canvas>
            <Model />
            <HeadsUp>
              {["zoomFit", "zoomArea", "zoomPrev", "rotate", "sectionV", "orient+", "shaded+", "glasses+", "appear+", "scene+"].map((n) => (
                <React.Fragment key={n}>
                  <ToolButton aria-label={n.replace("+", "")}><Icon name={n.replace("+", "")} size={10} /></ToolButton>
                  {n.endsWith("+") && <Caret $w={7} />}
                </React.Fragment>
              ))}
            </HeadsUp>
            <ViewButtons><WinControls light /></ViewButtons>
            <TaskTabs>
              {["home", "library", "folder", "toolboxR", "palette", "ball", "props"].map((n, i) => (
                <TaskTab key={n} $on={i === 0} aria-label={n}><Icon name={n} size={11} /></TaskTab>
              ))}
            </TaskTabs>
          </Canvas>
          <HScroll>
            <ArrowKnob $dir="left" aria-label="Scroll left" />
            <Thumb $grow={312} />
            <Track $grow={282} />
            <ArrowKnob $dir="right" aria-label="Scroll right" />
          </HScroll>
        </ViewColumn>
        <VScroll>
          <ArrowKnob $dir="up" aria-label="Scroll up" />
          <Track $grow={130} />
          <Thumb $grow={148} />
          <Track $grow={104} />
          <ArrowKnob $dir="down" aria-label="Scroll down" />
          <Gap $s={8} />
        </VScroll>

        <SideDock $right>
          <SideBar $right>
            <Grip $flat />
            <SideTools items={SKETCH} len={357} />
          </SideBar>
        </SideDock>
      </Work>

      <Status>
        SolidWorks Professional 2010
        <Spring />
        <Ridges $w={14} />
        <StatusCell>ModificaPart</StatusCell>
        <Ridges $w={14} />
        <StatusCell><Icon name="help" size={9} /></StatusCell>
        <Ridges $w={26} />
        <Icon name="tag" size={11} />
      </Status>

      <TaskBar>
        <TaskButton $start><Icon name="flag" size={9} />Start</TaskButton>
        <Grip />
        <Launch>
          {["ie", "desk", "blueA", "media", "mail", "sw", "connect", "swOpen", "swirl"].map((n) => (
            <ToolButton key={n} aria-label={n}><Icon name={n} size={10} /></ToolButton>
          ))}
        </Launch>
        <Rule />
        <Windows>
          {TASKS.map(([name, icon], i) => (
            <TaskButton key={name} $on={i === 4}><Icon name={icon} size={11} />{name}</TaskButton>
          ))}
        </Windows>
        <Rule />
        <DeskSearch>
          <BareInput aria-label="Cerca sul PC" placeholder="Cerca sul PC" />
          <LensKnob><Icon name="lens" size={9} /></LensKnob>
        </DeskSearch>
        <Tray>
          {["mail", "nets", "blueA", "bolt", "usb", "bt", "antivirus", "lens", "shield", "eject", "arrows", "volume"].map((n) => (
            <Icon key={n} name={n} size={10} />
          ))}
          <time>16.27</time>
        </Tray>
      </TaskBar>
    </Page>
  );
}
